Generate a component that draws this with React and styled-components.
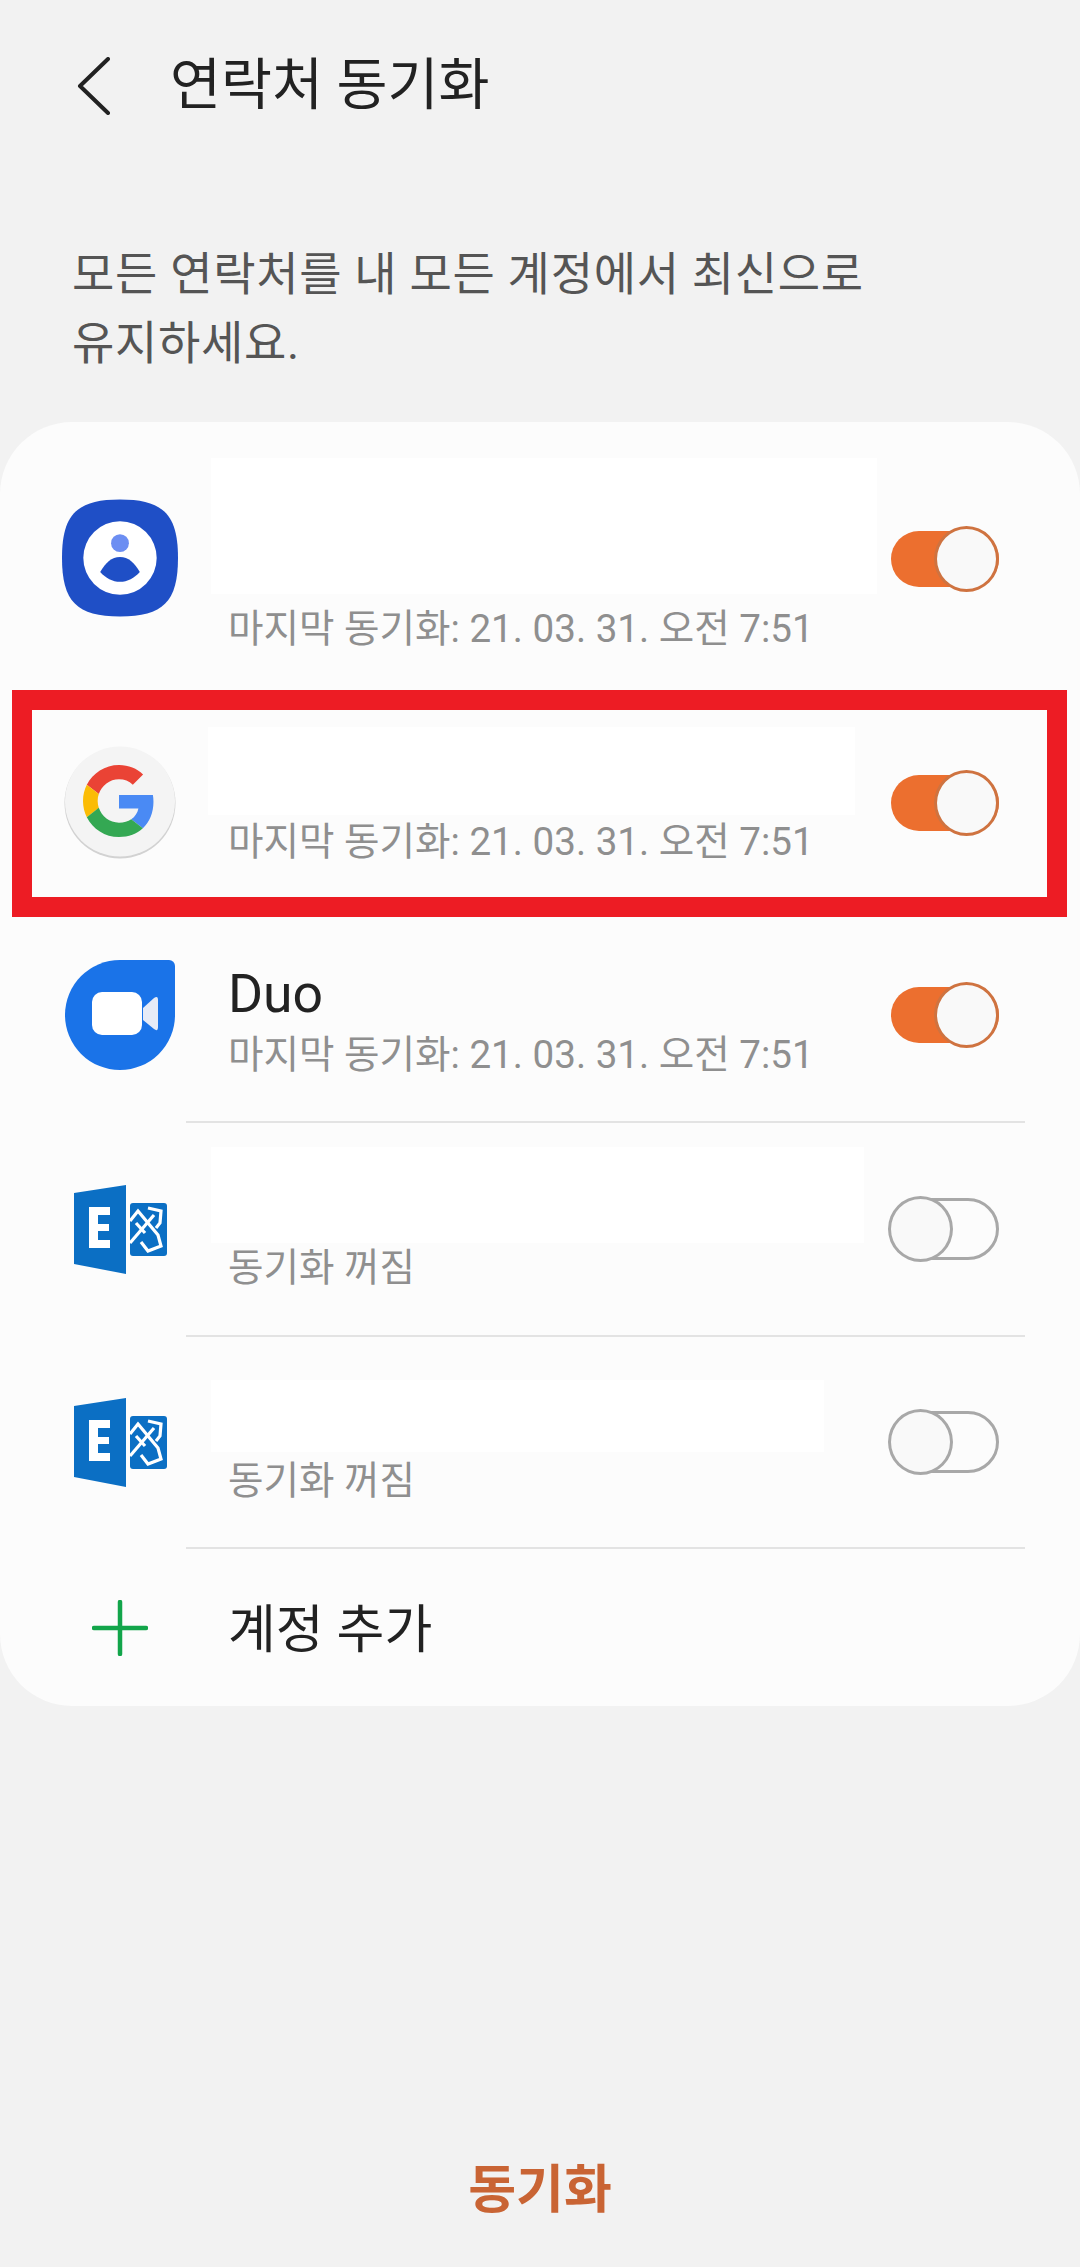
import React from 'react';
import styled, { createGlobalStyle } from 'styled-components';

const Global = createGlobalStyle`
  html, body { margin: 0; padding: 0; background: #f2f2f2; }
  * { box-sizing: border-box; }
`;

const Page = styled.div`
  position: relative;
  width: 1080px;
  height: 2267px;
  overflow: hidden;
  display: flex;
  flex-direction: column;
  background: #f2f2f2;
  font-family: Roboto, "Noto Sans CJK KR", sans-serif;
`;

const Header = styled.header`
  height: 172px;
  display: flex;
  align-items: center;
  padding-left: 75px;
  gap: 59px;
`;

const HeaderTitle = styled.h1`
  margin: 0;
  font-size: 55.4px;
  font-weight: 400;
  line-height: 64px;
  color: #222;
`;

const Description = styled.p`
  margin: 68px 0 0;
  padding: 0 72px;
  height: 138px;
  font-size: 46px;
  line-height: 69px;
  color: #555;
  letter-spacing: 0.7px;
`;

const Card = styled.section`
  margin-top: 44px;
  height: 1284px;
  background: #fcfcfc;
  border-radius: 72px;
`;

const Row = styled.div`
  height: ${p => p.$h}px;
  display: flex;
  align-items: center;
  padding-right: 81px;
`;

const IconSlot = styled.div`
  width: 116px;
  margin-left: 62px;
  margin-right: 50px;
  margin-bottom: ${p => p.$lift || 0}px;
  display: flex;
  justify-content: center;
  align-items: center;
  flex: none;
`;

const Body = styled.div`
  flex: 1;
  align-self: flex-start;
  padding-top: ${p => p.$top}px;
  min-width: 0;
`;

const Masked = styled.div`
  width: ${p => p.$w}px;
  height: ${p => p.$h}px;
  margin-left: ${p => p.$left}px;
  margin-bottom: ${p => p.$after}px;
  background: #fff;
`;

const Name = styled.div`
  font-size: 53.5px;
  line-height: 60px;
  color: #222;
  margin-top: 2px;
  margin-bottom: 4px;
`;

const Sub = styled.div`
  font-size: 38.6px;
  line-height: 54px;
  color: #8f8f8f;
  white-space: nowrap;
`;

const Divider = styled.div`
  height: 2px;
  margin: 0 55px 0 186px;
  background: #e3e3e3;
`;

const AddLabel = styled.div`
  font-size: 52px;
  line-height: 60px;
  margin-top: 7px;
  color: #222;
`;

const Switch = styled.div`
  position: relative;
  flex: none;
  width: 111px;
  height: 66px;
`;

const Track = styled.div`
  position: absolute;
  right: 0;
  left: 3px;
  top: ${p => (p.$on ? 5 : 2)}px;
  bottom: ${p => (p.$on ? 5 : 2)}px;
  border-radius: 40px;
  background: ${p => (p.$on ? '#ec6f2f' : 'transparent')};
  border: ${p => (p.$on ? 'none' : '3px solid #a8a8a8')};
`;

const Thumb = styled.div`
  position: absolute;
  top: 0;
  ${p => (p.$on ? 'right: 0;' : 'left: 0;')}
  width: 65px;
  height: 66px;
  border-radius: 50%;
  background: #f9f9f9;
  border: 3px solid ${p => (p.$on ? '#cf7340' : '#a8a8a8')};
`;

const Footer = styled.footer`
  margin-top: auto;
  height: 164px;
  display: flex;
  align-items: center;
  justify-content: center;
`;

const SyncButton = styled.div`
  font-size: 52px;
  font-weight: 700;
  color: #c96434;
`;

const Highlight = styled.div`
  position: absolute;
  left: 12px;
  top: 690px;
  width: 1055px;
  height: 227px;
  border: 20px solid #ed1c24;
`;

const Toggle = ({ on }) => (
  <Switch>
    <Track $on={on} />
    <Thumb $on={on} />
  </Switch>
);

const BackIcon = () => (
  <svg width="36" height="58" viewBox="0 0 36 58" fill="none">
    <path d="M33 2 L5 29 L33 56" stroke="#222" strokeWidth="4" strokeLinecap="round" strokeLinejoin="round" />
  </svg>
);

const ContactsIcon = () => (
  <svg width="117" height="118" viewBox="0 0 117 118">
    <path d="M58.5 0 C102 0 117 15 117 59 C117 103 102 118 58.5 118 C15 118 0 103 0 59 C0 15 15 0 58.5 0 Z" fill="#1f4fc6" />
    <circle cx="58.5" cy="59" r="37" fill="#fff" />
    <circle cx="58.5" cy="44" r="9" fill="#6c8ef2" />
    <path d="M38.5 73 C44 64 50 58 58.5 58 C67 58 73 64 78.5 73 C73 79 66 83 58.5 83 C51 83 44 79 38.5 73 Z" fill="#1f4fc6" />
  </svg>
);

const GoogleIcon = () => (
  <svg width="112" height="113" viewBox="0 0 112 113">
    <circle cx="56" cy="57" r="55.5" fill="#d2d2d2" />
    <circle cx="56" cy="55.5" r="55" fill="#f4f4f4" />
    <g transform="translate(19 19) scale(1.5)">
      <path fill="#ea4335" d="M24 9.5c3.54 0 6.71 1.22 9.21 3.6l6.85-6.85C35.9 2.38 30.47 0 24 0 14.62 0 6.51 5.38 2.56 13.22l7.98 6.19C12.43 13.72 17.74 9.5 24 9.5z" />
      <path fill="#4a8af4" d="M46.98 24.55c0-1.57-.15-3.09-.38-4.55H24v9.02h12.94c-.58 2.96-2.26 5.48-4.78 7.18l7.73 6c4.51-4.18 7.09-10.36 7.09-17.65z" />
      <path fill="#fbbc05" d="M10.53 28.59c-.48-1.45-.76-2.99-.76-4.59s.27-3.14.76-4.59l-7.98-6.19C.92 16.46 0 20.12 0 24c0 3.88.92 7.54 2.56 10.78l7.97-6.19z" />
      <path fill="#34a853" d="M24 48c6.48 0 11.93-2.13 15.89-5.81l-7.73-6c-2.15 1.45-4.92 2.3-8.16 2.3-6.26 0-11.57-4.22-13.47-9.91l-7.98 6.19C6.51 42.62 14.62 48 24 48z" />
    </g>
  </svg>
);

const DuoIcon = () => (
  <svg width="110" height="110" viewBox="0 0 110 110">
    <path d="M55 0 H104 A6 6 0 0 1 110 6 V55 A55 55 0 1 1 55 0 Z" fill="#1a73e8" />
    <rect x="27" y="32" width="50" height="43" rx="10" fill="#fff" />
    <path d="M78 48 L89 38 Q93 35 93 40 V67 Q93 72 89 69 L78 60 Z" fill="#e6ebf7" />
  </svg>
);

const ExchangeIcon = () => (
  <svg width="93" height="89" viewBox="0 0 93 89">
    <path d="M0 8 L52 0 V89 L0 79 Z" fill="#0b6fc4" />
    <path d="M15 22 H36 V30 H24 V39 H35 V46 H24 V55 H36 V63 H15 Z" fill="#fff" />
    <rect x="56" y="18" width="37" height="53" rx="3" fill="#0b6fc4" />
    <g fill="none" stroke="#fff" strokeWidth="3.2" strokeLinejoin="miter">
      <path d="M56 36 L64 26 L84 50 L87 61 L74 66 L67 57" />
      <path d="M56 58 L80 30" />
      <path d="M74 23 L87 26 L86 38 L82 43" />
      <path d="M62 38 L71 48" />
    </g>
  </svg>
);

const AddIcon = () => (
  <svg width="56" height="56" viewBox="0 0 56 56">
    <path d="M28 2 V54 M2 28 H54" stroke="#12a54a" strokeWidth="4.5" strokeLinecap="round" />
  </svg>
);

const lastSync = '마지막 동기화: 21. 03. 31. 오전 7:51';

export default function App() {
  return (
    <Page>
      <Global />
      <Header>
        <BackIcon />
        <HeaderTitle>연락처 동기화</HeaderTitle>
      </Header>
      <Description>
        모든 연락처를 내 모든 계정에서 최신으로
        <br />
        유지하세요.
      </Description>
      <Card>
        <Row $h={274}>
          <IconSlot $lift={3}><ContactsIcon /></IconSlot>
          <Body $top={36}>
            <Masked $w={666} $h={136} $left={-17} $after={8} />
            <Sub>{lastSync}</Sub>
          </Body>
          <Toggle on />
        </Row>
        <Row $h={213}>
          <IconSlot><GoogleIcon /></IconSlot>
          <Body $top={31}>
            <Masked $w={647} $h={88} $left={-20} $after={0} />
            <Sub>{lastSync}</Sub>
          </Body>
          <Toggle on />
        </Row>
        <Row $h={212}>
          <IconSlot><DuoIcon /></IconSlot>
          <Body $top={53}>
            <Name>Duo</Name>
            <Sub>{lastSync}</Sub>
          </Body>
          <Toggle on />
        </Row>
        <Divider />
        <Row $h={212}>
          <IconSlot><ExchangeIcon /></IconSlot>
          <Body $top={24}>
            <Masked $w={653} $h={96} $left={-17} $after={-2} />
            <Sub>동기화 꺼짐</Sub>
          </Body>
          <Toggle />
        </Row>
        <Divider />
        <Row $h={210}>
          <IconSlot><ExchangeIcon /></IconSlot>
          <Body $top={43}>
            <Masked $w={613} $h={72} $left={-17} $after={2} />
            <Sub>동기화 꺼짐</Sub>
          </Body>
          <Toggle />
        </Row>
        <Divider />
        <Row $h={157}>
          <IconSlot><AddIcon /></IconSlot>
          <AddLabel>계정 추가</AddLabel>
        </Row>
      </Card>
      <Footer>
        <SyncButton>동기화</SyncButton>
      </Footer>
      <Highlight />
    </Page>
  );
}
